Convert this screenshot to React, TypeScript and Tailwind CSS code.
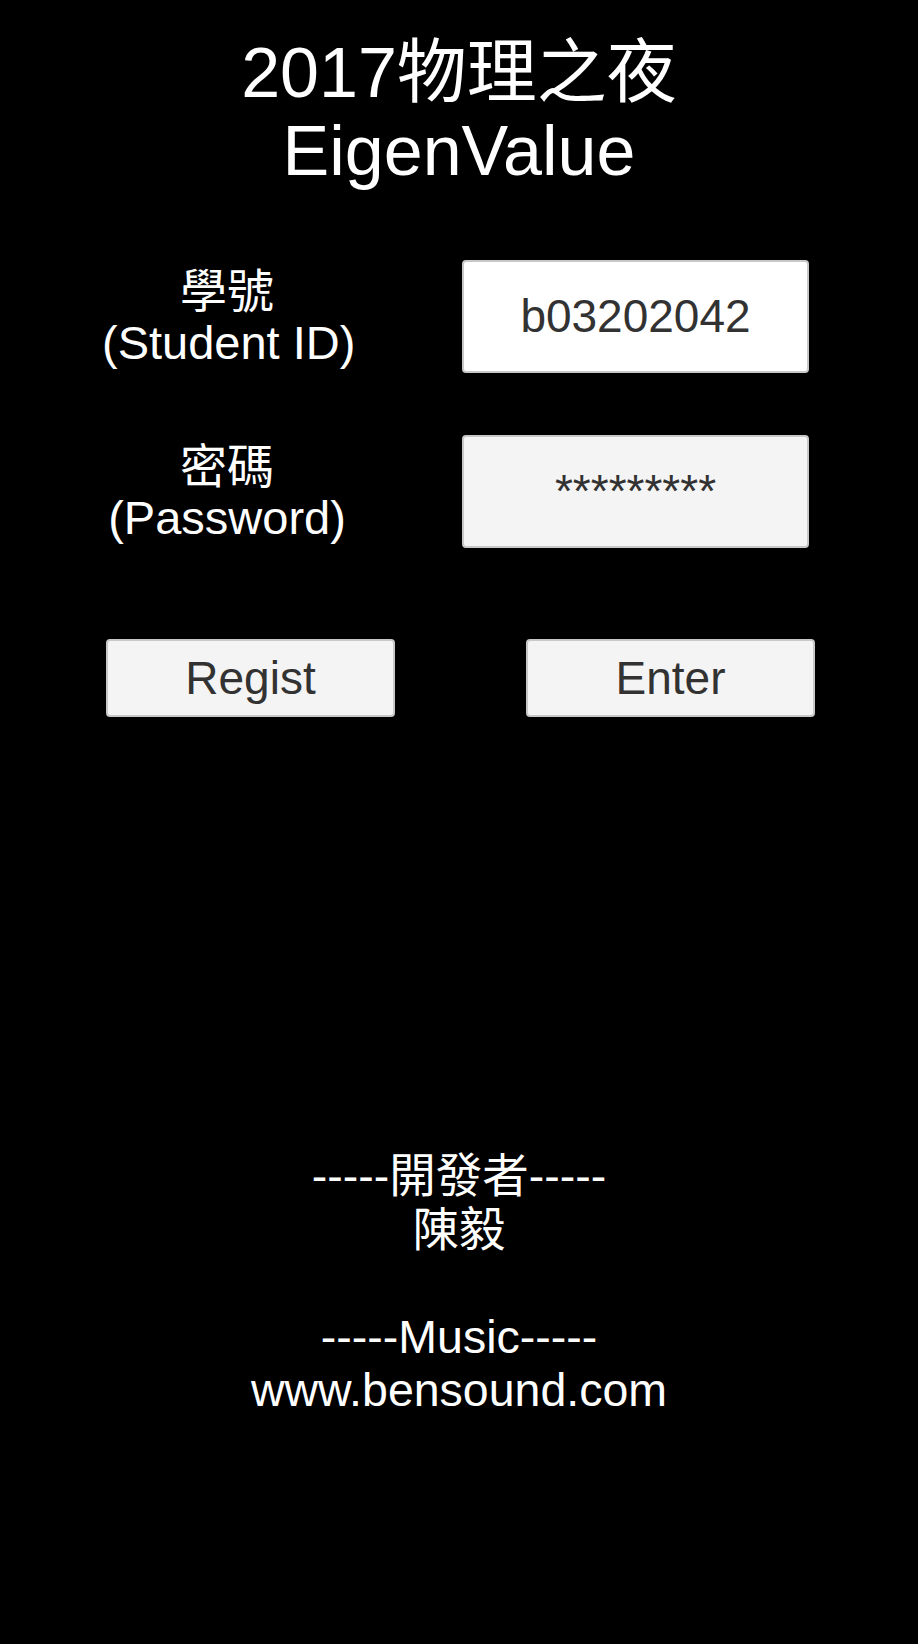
import React from 'react';

const font = "font-['Liberation_Sans','Noto_Sans_CJK_TC',sans-serif]";

function Field({ label, sub, value, filled }: { label: string; sub: string; value: string; filled?: boolean }) {
  return (
    <div className="flex items-center pl-[102px]">
      <div className="w-[250px] text-center text-white text-[47px] leading-[51px] whitespace-nowrap">
        <div>{label}</div>
        <div>{sub}</div>
      </div>
      <div
        className={`ml-[110px] w-[347px] h-[113px] flex items-center justify-center rounded-[4px] border-2 border-[#c8c8c8] text-[46px] text-[#323232] ${
          filled ? 'bg-[#f4f4f4]' : 'bg-white'
        }`}
      >
        {value}
      </div>
    </div>
  );
}

export default function App() {
  return (
    <div className={`min-h-[1644px] w-full bg-black ${font}`}>
      <div className="pt-[34px] text-center text-white text-[70px] leading-[78px]">
        <div>2017物理之夜</div>
        <div>EigenValue</div>
      </div>

      <div className="mt-[70px] flex flex-col gap-[62px]">
        <Field label="學號" sub="(Student ID)" value="b03202042" />
        <Field label="密碼" sub="(Password)" value="*********" filled />
      </div>

      <div className="mt-[91px] flex pl-[106px] gap-[131px]">
        <button className="w-[289px] h-[78px] rounded-[4px] border-2 border-[#c8c8c8] bg-[#f4f4f4] text-[46px] text-[#323232]">
          Regist
        </button>
        <button className="w-[289px] h-[78px] rounded-[4px] border-2 border-[#c8c8c8] bg-[#f4f4f4] text-[46px] text-[#323232]">
          Enter
        </button>
      </div>

      <div className="mt-[433px] text-center text-white text-[46.5px] leading-[53.5px]">
        <div>-----開發者-----</div>
        <div>陳毅</div>
        <div>&nbsp;</div>
        <div>-----Music-----</div>
        <div>www.bensound.com</div>
      </div>
    </div>
  );
}
